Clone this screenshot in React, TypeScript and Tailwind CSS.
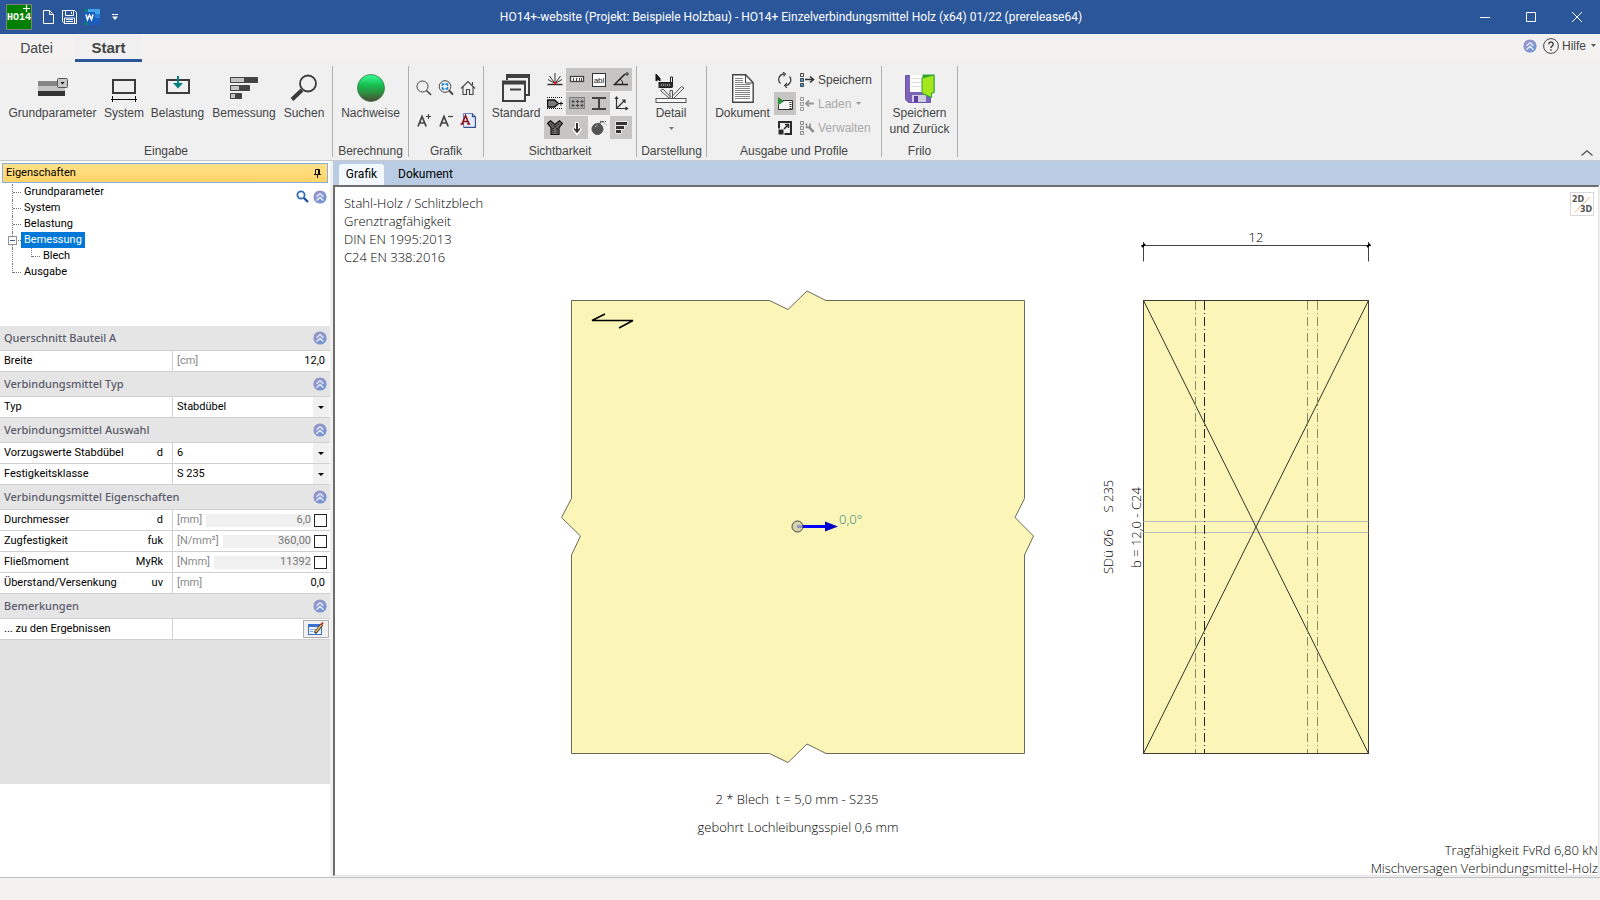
import React from 'react';

interface IconProps {
  className?: string;
}

const CollapseIcon: React.FC<IconProps> = ({ className = 'w-[14px] h-[14px]' }) => (
  <svg viewBox="0 0 14 14" className={className} fill="none">
    <defs>
      <linearGradient id="collapse" x1="0" y1="0" x2="1" y2="1">
        <stop offset="0" stopColor="#9a8fc9" />
        <stop offset="0.5" stopColor="#8d96cc" />
        <stop offset="1" stopColor="#5f93d2" />
      </linearGradient>
    </defs>
    <circle cx="7" cy="7" r="6.6" fill="url(#collapse)" />
    <path d="M3.5 6.8 7 3.6l3.5 3.2M3.5 10.6 7 7.4l3.5 3.2" stroke="#e6f3ff" strokeWidth="1.300" />
  </svg>
);

const LogoIcon = () => (
  <svg viewBox="0 0 26 26" className="w-[26px] h-[26px]">
    <rect x="0.5" y="0.5" width="25" height="25" fill="#008000" stroke="#808080" />
    <path d="M17 4.500h7M20.500 1v7" stroke="#fff" strokeWidth="1.200" />
    <text x="13" y="16" textAnchor="middle" fill="#fff" fontSize="10" fontWeight="700" fontFamily="Liberation Mono, monospace">HO14</text>
  </svg>
);

const NewIcon = () => (
  <svg viewBox="0 0 11 14" className="w-[11px] h-[14px]" fill="none" stroke="#fff">
    <path d="M0.5 0.5h6l4 4v9h-10zM6.500 0.500v4h4" />
  </svg>
);

const SaveIcon = () => (
  <svg viewBox="0 0 15 15" className="w-[15px] h-[15px]" fill="none" stroke="#fff">
    <path d="M0.500 0.500h12l2 2v11h-12l-2-2zM3.500 0.500v5h8v-5M2.500 14v-6h10v6M9.500 2v2M4 9.500h7M4 11.500h7" />
  </svg>
);

const WordIcon = () => (
  <svg viewBox="0 0 16 16" className="w-[16px] h-[16px]">
    <rect width="16" height="16" fill="#1b5cbd" />
    <path d="M4 0h12v5H4z" fill="#41a5ee" />
    <path d="M10 5h6v4h-6z" fill="#2b7cd3" />
    <path d="M0 0h4v3H0zM0 13h4v3H0z" fill="#0f7c7c" />
    <rect x="0" y="3" width="11" height="10" fill="#1a5dbe" />
    <path d="M2 5.500l1.500 5 2-4.500 2 4.500L9 5.500" stroke="#fff" strokeWidth="1.500" fill="none" />
  </svg>
);

const GrundparameterIcon = () => (
  <svg viewBox="0 0 32 28" className="w-[32px] h-[28px]">
    <path d="M1 7h27v5H1z" fill="#868686" />
    <path d="M1 12h27v5H1z" fill="#c4c4c4" />
    <path d="M1 17h27v5H1z" fill="#333" />
    <rect x="20.500" y="4.500" width="10" height="9" rx="1" fill="#c9c9c9" stroke="#555" />
    <path d="M23.500 8h4l-2 2.500z" fill="#111" />
  </svg>
);

const SystemIcon = () => (
  <svg viewBox="0 0 28 28" className="w-[28px] h-[28px]" fill="none">
    <rect x="3" y="6" width="22" height="13" stroke="#3c3c3c" strokeWidth="2" />
    <path d="M1 25.500h26M2.500 22v6M25.500 22v6" stroke="#111" />
  </svg>
);

const BelastungIcon = () => (
  <svg viewBox="0 0 28 28" className="w-[28px] h-[28px]" fill="none">
    <rect x="3" y="6" width="22" height="13" stroke="#3c3c3c" strokeWidth="2" />
    <path d="M14 2v8" stroke="#008080" strokeWidth="2" />
    <path d="M9 9h10l-5 5.500z" fill="#008080" />
  </svg>
);

const BemessungIcon = () => (
  <svg viewBox="0 0 28 28" className="w-[28px] h-[28px]" stroke="#444">
    <path d="M0.500 3.500h27v5h-27zM0.500 11.500h19v5h-19zM0.500 19.500h11v5h-11z" fill="#444" />
    <path d="M0.500 3.500h14v5h-14zM0.500 11.500h9v5h-9zM0.500 19.500h5v5h-5z" fill="#c4c4c4" />
  </svg>
);

const SuchenIcon = () => (
  <svg viewBox="0 0 28 28" className="w-[28px] h-[28px]" fill="none" stroke="#3a3a3a">
    <circle cx="18" cy="9.500" r="8" strokeWidth="1.800" />
    <path d="M12 16 2 25.500" strokeWidth="4" />
  </svg>
);

const NachweiseIcon = () => (
  <svg viewBox="0 0 28 28" className="w-[28px] h-[28px]">
    <defs>
      <linearGradient id="ball" x1="0" y1="0" x2="0" y2="1">
        <stop offset="0" stopColor="#38ff9a" />
        <stop offset="0.400" stopColor="#16bd4e" />
        <stop offset="0.700" stopColor="#2f8a40" />
        <stop offset="1" stopColor="#4e4636" />
      </linearGradient>
    </defs>
    <circle cx="14" cy="14" r="13.500" fill="url(#ball)" stroke="#3b7a45" strokeWidth="0.800" />
  </svg>
);

const StandardIcon = () => (
  <svg viewBox="0 0 28 28" className="w-[28px] h-[28px]" fill="none" stroke="#3f3f3f">
    <path d="M5 6V1M4 2.500h24M27 1v20.500M24 21h4" strokeWidth="2" />
    <path d="M4 2h24" strokeWidth="4" />
    <rect x="1" y="8" width="22" height="19" strokeWidth="2" />
    <path d="M0 8.500h24" strokeWidth="4" />
    <path d="M8 15.500h11" strokeWidth="2" />
  </svg>
);

const DetailIcon = () => (
  <svg viewBox="0 0 32 30" className="w-[32px] h-[30px]" fill="none" stroke="#555">
    <path d="M1 1v7l2-1.500 2 1.500V5.500z" fill="#111" stroke="#111" />
    <rect x="4" y="9.500" width="13" height="5" fill="#333" stroke="#222" />
    <path d="M6 12h10" stroke="#eee" strokeDasharray="1 1" />
    <path d="M15.500 9V4h2v10" stroke="#222" />
    <path d="M5.500 17.500 15 26M8 16l7 7.500M29 15l-10 10M26.500 13.500 17 23.500M29 15l-2.500-1.500M5.500 17.500 8 16" />
    <path d="M15 26v-8.500h2.500V26" />
    <rect x="1" y="25.500" width="30" height="4" fill="#f8f8f8" />
  </svg>
);

const DokumentIcon = () => (
  <svg viewBox="0 0 22 29" className="w-[22px] h-[29px]" fill="none" stroke="#444">
    <path d="M0.700 0.700h13l7.500 8v19.500H0.700z" fill="#fff" strokeWidth="1.400" />
    <path d="M13.500 1v8h7.500" />
    <path d="M3 4.500h8M3 6.500h8M3 8.500h8M3 10.500h15M3 12.500h15M3 14.500h15M3 16.500h15M3 18.500h15M3 20.500h15M3 22.500h15M3 24.500h15" stroke="#858585" />
  </svg>
);

const FriloIcon = () => (
  <svg viewBox="0 0 30 29" className="w-[30px] h-[29px]">
    <path d="M0.500 1.500h25v27h-22l-3-3z" fill="#7c62b8" stroke="#6c52a8" />
    <rect x="5" y="1" width="15" height="17" fill="#fff" />
    <path d="M6 4.500h13M6 8.500h13M6 12.500h13" stroke="#ddd" />
    <rect x="7" y="21" width="14" height="7" fill="#cfcce0" />
    <rect x="9" y="22" width="4" height="6" fill="#5b3fa0" />
    <path d="M17.500 0.500h12v18l-3 1.500v4l-9-4z" fill="#2fa52f" />
    <path d="M17 4 29 1v17.500l-2.500.5v4.500L17 19z" fill="#a6e61c" stroke="#2ea836" />
  </svg>
);

const ZoomIcon = () => (
  <svg viewBox="0 0 16 16" className="w-4 h-4" fill="none" stroke="#444">
    <circle cx="6.500" cy="6.500" r="5.500" />
    <path d="M10.500 10.500 15 15" strokeWidth="1.600" />
  </svg>
);

const ZoomFitIcon = () => (
  <svg viewBox="0 0 16 16" className="w-4 h-4" fill="none" stroke="#444">
    <circle cx="7" cy="6.500" r="5.800" />
    <path d="M11 10.500 15 14.500" strokeWidth="1.800" />
    <path d="M4.500 6V4h2M7.500 4h2v2M9.500 7v2h-2M6.500 9h-2V7" stroke="#1583d8" strokeWidth="1.500" />
  </svg>
);

const HomeIcon = () => (
  <svg viewBox="0 0 16 16" className="w-4 h-4" fill="none" stroke="#444" strokeWidth="1.100">
    <path d="M1 8.500 8 1.500l7 7M3 7v7.500h3.500v-5h3v5H13V7M12.500 5V2" />
  </svg>
);

const FontUpIcon = () => (
  <svg viewBox="0 0 16 16" className="w-4 h-4" fill="none" stroke="#444">
    <path d="M2 14.500 6 4.500l4.200 10M3.500 11h5.200" strokeWidth="1.700" />
    <path d="M10 4.500h5M12.500 2v5" strokeWidth="1.200" />
  </svg>
);

const FontDownIcon = () => (
  <svg viewBox="0 0 16 16" className="w-4 h-4" fill="none" stroke="#444">
    <path d="M2 14.500 6 4.500l4.200 10M3.500 11h5.200" strokeWidth="1.700" />
    <path d="M10 4.500h5" strokeWidth="1.200" />
  </svg>
);

const FontPageIcon = () => (
  <svg viewBox="0 0 16 16" className="w-4 h-4" fill="none">
    <path d="M3.500 1.500h9l3 3v11h-12z" fill="#e4ecfb" stroke="#6a82b8" />
    <path d="M12.500 1.500v3h3M15.500 5v10.500H4" stroke="#35508e" strokeWidth="1.300" />
    <path d="M2 12 5.500 3.500 9 12M3 9.500h4.500M0.500 12h3M7.200 12h3" stroke="#8f0f16" strokeWidth="1.600" />
  </svg>
);

const FanIcon = () => (
  <svg viewBox="0 0 16 16" className="w-4 h-4" stroke="#333" fill="none">
    <path d="M8 11.500V1M8 11.500 2.500 4M8 11.500 13.500 4M8 11.500 1 7.500M8 11.500l7-4" />
    <path d="M0.500 12.500h15" strokeWidth="1.500" />
    <circle cx="8" cy="11" r="1.500" fill="#e02020" stroke="none" />
  </svg>
);

const RulerIcon = () => (
  <svg viewBox="0 0 16 16" className="w-4 h-4" fill="#fff" stroke="#444">
    <rect x="1.500" y="4.500" width="13" height="5" strokeWidth="1.300" />
    <path d="M4.500 6v3M7.500 6v3M10.500 6v3M12.500 6v3" />
  </svg>
);

const AblIcon = () => (
  <svg viewBox="0 0 16 16" className="w-4 h-4">
    <rect x="1.500" y="1.500" width="13" height="13" fill="#fff" stroke="#333" />
    <text x="8" y="11" fontSize="8" textAnchor="middle" fontFamily="Liberation Sans, sans-serif" fill="#111">abl</text>
  </svg>
);

const AngleIcon = () => (
  <svg viewBox="0 0 16 16" className="w-4 h-4" fill="none" stroke="#222">
    <path d="M15 12.500H1.500L12 2" strokeWidth="1.500" />
    <path d="M7 7q3 1.500 3 5.500" />
    <circle cx="14" cy="2" r="1.200" />
  </svg>
);

const DowelIcon = () => (
  <svg viewBox="0 0 16 16" className="w-4 h-4" fill="none" stroke="#111">
    <path d="M0 1.500h16M0 12.500h16" strokeDasharray="1 1" />
    <path d="M0.500 4h7l4 3.500-4 3.500h-7z" fill="#7a7a7a" strokeWidth="1.400" />
    <path d="M12 7.500h4M14 5.500v4" />
  </svg>
);

const GridIcon = () => (
  <svg viewBox="0 0 16 16" className="w-4 h-4" fill="none" stroke="#444">
    <rect x="0.500" y="1.500" width="15" height="11" strokeDasharray="1 1" fill="#aaa" />
    <path d="M2.500 5.500h3M7 5.500h3M11.500 5.500h3M2.500 9.500h3M7 9.500h3M11.500 9.500h3M4 4v3M8.500 4v3M13 4v3M4 8v3M8.500 8v3M13 8v3" />
  </svg>
);

const BeamIcon = () => (
  <svg viewBox="0 0 16 16" className="w-4 h-4" fill="none" stroke="#444">
    <path d="M1 2h14M1 13h14M8 3v10" strokeWidth="2" />
  </svg>
);

const AxesIcon = () => (
  <svg viewBox="0 0 16 16" className="w-4 h-4" fill="none" stroke="#333">
    <path d="M3.500 1v11.500H14M3.500 12.500 11.500 4.500M2 3l1.500-2L5 3M12.500 11l2 1.500-2 1.500M9 4h3v3" strokeWidth="1.200" />
  </svg>
);

const CrossPlateIcon = () => (
  <svg viewBox="0 0 16 16" className="w-4 h-4" fill="#666" stroke="#111">
    <path d="M0.500 3.500 3.500 .8 8 4.500 12.500.8l3 2.700L12 7.500v7H4v-7z" strokeWidth="1.200" />
    <path d="M6 8v6M10 8v6M4 4l8 6M12 4 4 10" strokeDasharray="1 1" />
  </svg>
);

const ArrowDownIcon = () => (
  <svg viewBox="0 0 16 16" className="w-4 h-4" fill="none">
    <path d="M8 2v10M4.500 8 8 12.500 11.500 8" stroke="#fff" strokeWidth="4" />
    <path d="M8 3v8" stroke="#333" strokeWidth="2" />
    <path d="M5 8.500 8 12l3-3.500" strokeWidth="1.500" stroke="#333" />
  </svg>
);

const BombIcon = () => (
  <svg viewBox="0 0 16 16" className="w-4 h-4" fill="none" stroke="#555">
    <circle cx="6.500" cy="9" r="5.500" fill="#555" />
    <path d="M8.500 4l1.500-2.500 3 .5" strokeWidth="1.200" />
    <path d="M12 1.500h4M13.500 3.500l2 1.500" strokeDasharray="1 1" />
    <path d="M4 7q1-1.500 2.500-1.500" stroke="#bbb" />
  </svg>
);

const BarsIcon = () => (
  <svg viewBox="0 0 16 16" className="w-4 h-4" fill="#333" stroke="#e8e8e8">
    <path d="M2.500 1.500h12v4h-12zM2.500 5.500h9v4h-9zM2.500 9.500h6v4h-6z" />
  </svg>
);

const RefreshIcon = () => (
  <svg viewBox="0 0 16 16" className="w-4 h-4" fill="none" stroke="#444">
    <path d="M3.500 11.500A5.500 5.500 0 0 1 7.500 2M12.500 4.500a5.500 5.500 0 0 1-4 9" strokeWidth="1.300" />
    <path d="M6 0 8.500 2 6.500 4.500M10 11 7.500 13.500 10 16" strokeWidth="1.100" />
  </svg>
);

const PreviewIcon = () => (
  <svg viewBox="0 0 16 16" className="w-4 h-4" fill="none">
    <path d="M4 4.500h11.500v9H1.500V9" fill="#f5f5f5" stroke="#333" />
    <path d="M13.500 6v7" stroke="#333" strokeWidth="2" strokeDasharray="1 1" />
    <path d="M1 1v8.500L7 5.200z" fill="#2f8f3c" />
  </svg>
);

const ExpandIcon = () => (
  <svg viewBox="0 0 16 16" className="w-4 h-4" fill="none" stroke="#2b2b2b">
    <rect x="2" y="2" width="12" height="12" strokeWidth="2" />
    <path d="M1 9h6v6H1z" fill="#2b2b2b" stroke="#f0f0f0" />
    <path d="M7 9l4-4M8 4.500h3.500V8" strokeWidth="1.500" />
  </svg>
);

const ProfileSaveIcon = () => (
  <svg viewBox="0 0 16 16" className="w-4 h-4" fill="none">
    <path d="M1.500 1.500h3v3h-3z" stroke="#444" />
    <path d="M1.500 6.500h3v3h-3zM1.500 11.500h3v3h-3z" fill="#3aa5e8" stroke="#444" />
    <path d="M6 7.500h8M11 4.500l3.500 3-3.500 3" stroke="#333" strokeWidth="1.600" />
  </svg>
);

const ProfileLoadIcon = () => (
  <svg viewBox="0 0 16 16" className="w-4 h-4" fill="none" stroke="#999">
    <path d="M1.500 1.500h3v3h-3zM1.500 6.500h3v3h-3zM1.500 11.500h3v3h-3z" />
    <path d="M15 7.500H7.500M10 4.500l-3 3 3 3" strokeWidth="1.800" />
  </svg>
);

const ProfileManageIcon = () => (
  <svg viewBox="0 0 16 16" className="w-4 h-4" fill="none" stroke="#888">
    <path d="M1.500 1.500h3v3h-3zM1.500 6.500h3v3h-3zM1.500 11.500h3v3h-3z" />
    <path d="M9.500 6.500l5 5.500" strokeWidth="2.500" />
    <path d="M7.500 3.500v4H11v-4" strokeWidth="1.500" />
  </svg>
);

const EditNoteIcon = () => (
  <svg viewBox="0 0 16 14" className="w-[16px] h-[14px]">
    <rect x="0.500" y="2.500" width="13" height="10" fill="#eaf1ff" stroke="#3f6cc0" />
    <path d="M0 2h14v3H0z" fill="#3a6fd0" />
    <path d="M2 7.500h3M6 7.500h3M2 9.500h3M6 9.500h2" stroke="#7fa3dc" />
    <path d="M7 11 14 2.500" stroke="#333" strokeWidth="3" />
    <path d="M7.500 10 14 2.500" stroke="#f0c35a" strokeWidth="1.500" />
    <path d="M13 3l2-2.500" stroke="#c0392b" strokeWidth="2" />
  </svg>
);

interface BigItem {
  label: string;
  width: string;
  icon: React.ReactNode;
}

const eingabeItems: BigItem[] = [
  { label: 'Grundparameter', width: 'w-[91px]', icon: <GrundparameterIcon /> },
  { label: 'System', width: 'w-[40px]', icon: <SystemIcon /> },
  { label: 'Belastung', width: 'w-[55px]', icon: <BelastungIcon /> },
  { label: 'Bemessung', width: 'w-[66px]', icon: <BemessungIcon /> },
  { label: 'Suchen', width: 'w-[42px]', icon: <SuchenIcon /> },
];

const grafikItems = [
  { label: 'Zoom', icon: <ZoomIcon /> },
  { label: 'Zoom Fenster', icon: <ZoomFitIcon /> },
  { label: 'Gesamtansicht', icon: <HomeIcon /> },
  { label: 'Schrift größer', icon: <FontUpIcon /> },
  { label: 'Schrift kleiner', icon: <FontDownIcon /> },
  { label: 'Schriftart', icon: <FontPageIcon /> },
];

const viewToggles = [
  { label: 'Lager', on: false, icon: <FanIcon /> },
  { label: 'Bemaßung', on: true, icon: <RulerIcon /> },
  { label: 'Texte', on: true, icon: <AblIcon /> },
  { label: 'Winkel', on: true, icon: <AngleIcon /> },
  { label: 'Dübel', on: false, icon: <DowelIcon /> },
  { label: 'Raster', on: true, icon: <GridIcon /> },
  { label: 'Profil', on: true, icon: <BeamIcon /> },
  { label: 'Achsen', on: false, icon: <AxesIcon /> },
  { label: 'Blech', on: true, icon: <CrossPlateIcon /> },
  { label: 'Last', on: true, icon: <ArrowDownIcon /> },
  { label: 'Ausfall', on: false, icon: <BombIcon /> },
  { label: 'Ergebnisse', on: true, icon: <BarsIcon /> },
];

interface RibbonGroupProps {
  title: string;
  width: string;
  children: React.ReactNode;
}

const RibbonGroup: React.FC<RibbonGroupProps> = ({ title, width, children }) => (
  <section className={`${width} h-[91px] shrink-0 border-r border-[#b0b0b0] flex flex-col`}>
    <div className="flex h-[77px] shrink-0">{children}</div>
    <h2 className="text-center leading-4">{title}</h2>
  </section>
);

const BigButton: React.FC<{ width: string; icon: React.ReactNode; children: React.ReactNode }> = ({ width, icon, children }) => (
  <button className={`${width} shrink-0 pt-[5px] flex flex-col items-center whitespace-nowrap`}>
    <span className="h-[34px] flex items-center">{icon}</span>
    <span className="leading-4">{children}</span>
  </button>
);

const TitleBar = () => (
  <header className="h-[34px] bg-[#2b579a] text-white flex items-center pl-[6px] shrink-0">
    <div className="flex items-center w-[114px] shrink-0">
      <LogoIcon />
      <button aria-label="Neu" className="ml-[11px]"><NewIcon /></button>
      <button aria-label="Speichern" className="ml-[8px]"><SaveIcon /></button>
      <button aria-label="Word" className="ml-[7px]"><WordIcon /></button>
      <button aria-label="Anpassen" className="ml-[12px]">
        <svg viewBox="0 0 6 6" className="w-[6px] h-[6px]" fill="#fff"><path d="M0 0h6v1H0zM0 2.500h6L3 6z" /></svg>
      </button>
    </div>
    <h1 className="flex-1 text-center text-xs font-['Roboto',sans-serif] whitespace-nowrap">
      HO14+-website (Projekt: Beispiele Holzbau) - HO14+ Einzelverbindungsmittel Holz (x64) 01/22 (prerelease64)
    </h1>
    <div className="flex w-[138px] shrink-0">
      <button aria-label="Minimieren" className="w-[46px] flex justify-center">
        <svg viewBox="0 0 10 10" className="w-[10px] h-[10px]" stroke="#fff"><path d="M0 5.500h10" /></svg>
      </button>
      <button aria-label="Maximieren" className="w-[46px] flex justify-center">
        <svg viewBox="0 0 10 10" className="w-[10px] h-[10px]" stroke="#fff" fill="none"><path d="M0.500 0.500h9v9h-9z" /></svg>
      </button>
      <button aria-label="Schließen" className="w-[46px] flex justify-center">
        <svg viewBox="0 0 10 10" className="w-[10px] h-[10px]" stroke="#fff"><path d="M0 0l10 10M10 0 0 10" /></svg>
      </button>
    </div>
  </header>
);

const MenuTabs = () => (
  <nav className="h-[28px] bg-[#f3f2f1] flex items-stretch shrink-0 text-[#444]">
    <button className="w-[73px] text-sm">Datei</button>
    <button className="w-[67px] ml-[2px] pt-[3px] text-[15px] font-bold border-b-[3px] border-[#2b579a] bg-[#f0f0f0]">Start</button>
    <div className="ml-auto flex items-center pr-[4px]">
      <button aria-label="Menüband einklappen" className="mb-[5px]"><CollapseIcon /></button>
      <button className="ml-[6px] mb-[5px] flex items-center text-xs">
        <svg viewBox="0 0 16 16" className="w-4 h-4" fill="none" stroke="#444">
          <circle cx="8" cy="8" r="7.400" />
          <path d="M5.800 6.200a2.200 2.200 0 1 1 3.300 1.900q-1.100.7-1.100 1.900M8 11.300v1.500" strokeWidth="1.500" />
        </svg>
        <span className="ml-[3px]">Hilfe</span>
        <svg viewBox="0 0 5 3" className="w-[5px] h-[3px] ml-[5px]" fill="#555"><path d="M0 0h5L2.500 3z" /></svg>
      </button>
    </div>
  </nav>
);

const Ribbon = () => (
  <div className="h-[99px] bg-[#f0f0f0] border-b border-[#c8c8c8] flex pt-[4px] shrink-0 text-[#444] text-xs">
    <RibbonGroup title="Eingabe" width="w-[333px]">
      <div className="flex gap-[6px] pl-[7px]">
        {eingabeItems.map((item) => (
          <BigButton key={item.label} width={item.width} icon={item.icon}>{item.label}</BigButton>
        ))}
      </div>
    </RibbonGroup>

    <RibbonGroup title="Berechnung" width="w-[76px]">
      <BigButton width="w-[75px]" icon={<NachweiseIcon />}>Nachweise</BigButton>
    </RibbonGroup>

    <RibbonGroup title="Grafik" width="w-[75px]">
      <div className="grid grid-cols-3 content-start pl-[4px] pt-[6px]">
        {grafikItems.map((item) => (
          <button key={item.label} aria-label={item.label} className="w-[22px] h-[32px] flex items-center justify-center">
            {item.icon}
          </button>
        ))}
      </div>
    </RibbonGroup>

    <RibbonGroup title="Sichtbarkeit" width="w-[153px]">
      <BigButton width="w-[60px] pl-[4px]" icon={<StandardIcon />}>Standard</BigButton>
      <div className="grid grid-cols-4 content-start gap-y-[1px] pt-[2px]">
        {viewToggles.map((item) => (
          <button
            key={item.label}
            aria-label={item.label}
            aria-pressed={item.on}
            className={`w-[22px] h-[23px] flex items-center justify-center ${item.on ? 'bg-[#c6c5c4]' : ''}`}
          >
            {item.icon}
          </button>
        ))}
      </div>
    </RibbonGroup>

    <RibbonGroup title="Darstellung" width="w-[70px]">
      <BigButton width="w-[68px]" icon={<DetailIcon />}>
        <span className="flex flex-col items-center gap-[6px]">
          Detail
          <svg viewBox="0 0 5 3" className="w-[5px] h-[3px]" fill="#777"><path d="M0 0h5L2.500 3z" /></svg>
        </span>
      </BigButton>
    </RibbonGroup>

    <RibbonGroup title="Ausgabe und Profile" width="w-[175px]">
      <BigButton width="w-[67px] pl-[4px]" icon={<DokumentIcon />}>Dokument</BigButton>
      <div className="flex flex-col gap-[1px] pt-[2px]">
        <button aria-label="Aktualisieren" className="w-[22px] h-[23px] flex items-center justify-center"><RefreshIcon /></button>
        <button aria-label="Vorschau" aria-pressed="true" className="w-[22px] h-[23px] flex items-center justify-center bg-[#c6c5c4]"><PreviewIcon /></button>
        <button aria-label="Vergrößern" className="w-[22px] h-[23px] flex items-center justify-center"><ExpandIcon /></button>
      </div>
      <div className="flex flex-col gap-[1px] pt-[2px] pl-[3px]">
        <button className="h-[23px] flex items-center gap-[3px]"><ProfileSaveIcon />Speichern</button>
        <button disabled className="h-[23px] flex items-center gap-[3px] text-[#aaa]">
          <ProfileLoadIcon />
          Laden
          <svg viewBox="0 0 5 3" className="w-[5px] h-[3px] ml-[2px]" fill="#999"><path d="M0 0h5L2.500 3z" /></svg>
        </button>
        <button disabled className="h-[23px] flex items-center gap-[3px] text-[#aaa]"><ProfileManageIcon />Verwalten</button>
      </div>
    </RibbonGroup>

    <RibbonGroup title="Frilo" width="w-[76px]">
      <BigButton width="w-[75px]" icon={<FriloIcon />}>
        Speichern
        <br />
        und Zurück
      </BigButton>
    </RibbonGroup>

    <button aria-label="Menüband minimieren" className="ml-auto mr-[7px] mb-[4px] self-end">
      <svg viewBox="0 0 12 6" className="w-[12px] h-[6px]" fill="none" stroke="#555"><path d="M0.500 5.500 6 .8l5.500 4.700" strokeWidth="1.300" /></svg>
    </button>
  </div>
);

const TreeLeaf: React.FC<{ label: string; last?: boolean }> = ({ label, last }) => (
  <li className="h-4 flex">
    <span className={`w-[9px] border-l border-dotted border-[#777] ${last ? 'h-[9px]' : 'h-4'}`}>
      <span className="block h-[9px] border-b border-dotted border-[#777]" />
    </span>
    <span className="pl-[3px] leading-4">{label}</span>
  </li>
);

const Tree = () => (
  <div className="h-[142px] bg-white flex justify-between shrink-0">
    <ul className="pl-[12px]">
      <TreeLeaf label="Grundparameter" />
      <TreeLeaf label="System" />
      <TreeLeaf label="Belastung" />
      <li className="relative">
        <div className="h-4 flex border-l border-dotted border-[#777]">
          <button aria-label="Bemessung zuklappen" className="absolute left-[-4px] top-[4px] w-[9px] h-[9px] border border-[#919191] bg-white flex items-center justify-center">
            <span className="w-[5px] h-px bg-[#3b5b96]" />
          </button>
          <span className="w-[8px] h-[9px] border-b border-dotted border-[#777]" />
          <span className="w-[64px] h-4 pl-[3px] leading-4 bg-[#0078d7] text-white">Bemessung</span>
        </div>
        <ul className="pl-[18px] border-l border-dotted border-[#777]">
          <TreeLeaf label="Blech" last />
        </ul>
      </li>
      <TreeLeaf label="Ausgabe" last />
    </ul>
    <div className="flex items-start gap-[4px] pt-[6px] pr-[3px]">
      <button aria-label="Suchen">
        <svg viewBox="0 0 13 13" className="w-[13px] h-[13px]" fill="none" stroke="#2f6cb5">
          <circle cx="5" cy="5" r="3.600" strokeWidth="1.800" />
          <path d="M8 8l4 4" strokeWidth="2.400" stroke="#1f4f96" />
        </svg>
      </button>
      <button aria-label="Alle einklappen"><CollapseIcon /></button>
    </div>
  </div>
);

const SectionHead: React.FC<{ title: string }> = ({ title }) => (
  <h3 className="h-[25px] bg-[#e5e5e5] border-b border-[#d0d0d0] pl-[4px] pr-[3px] flex items-center justify-between text-[11px] font-medium text-[#5a5a6a] font-['Noto_Sans',sans-serif]">
    {title}
    <button aria-label={`${title} einklappen`}><CollapseIcon /></button>
  </h3>
);

interface RowProps {
  id: string;
  label: string;
  symbol?: string;
  children: React.ReactNode;
}

const Row: React.FC<RowProps> = ({ id, label, symbol, children }) => (
  <div className="h-[21px] bg-white border-b border-[#d0d0d0] flex">
    <label htmlFor={id} className="w-[173px] border-r border-[#d0d0d0] pl-[4px] pr-[9px] flex items-center justify-between">
      <span>{label}</span>
      <span>{symbol}</span>
    </label>
    <div className="flex-1 min-w-0 flex items-center pl-[4px]">{children}</div>
  </div>
);

const ValueRow: React.FC<{ id: string; label: string; symbol?: string; unit: string; value: string }> = ({ id, label, symbol, unit, value }) => (
  <Row id={id} label={label} symbol={symbol}>
    <span className="text-[#888]">{unit}</span>
    <input id={id} defaultValue={value} className="flex-1 min-w-0 text-right pr-[5px] outline-none" />
  </Row>
);

const LockedRow: React.FC<{ id: string; label: string; symbol: string; unit: string; value: string }> = ({ id, label, symbol, unit, value }) => (
  <Row id={id} label={label} symbol={symbol}>
    <span className="text-[#888] mr-[4px]">{unit}</span>
    <input id={id} defaultValue={value} disabled className="flex-1 min-w-0 h-[13px] text-right bg-[#f0f0f0] text-[#777]" />
    <input
      type="checkbox"
      aria-label={`${label} bearbeiten`}
      className="appearance-none w-[13px] h-[13px] ml-[3px] mr-[3px] border border-[#222] bg-white"
    />
  </Row>
);

const SelectRow: React.FC<{ id: string; label: string; symbol?: string; value: string }> = ({ id, label, symbol, value }) => (
  <Row id={id} label={label} symbol={symbol}>
    <div className="relative flex-1 h-full mr-[1px]">
      <select id={id} defaultValue={value} className="appearance-none w-full h-full outline-none">
        <option>{value}</option>
      </select>
      <span className="absolute right-0 top-0 w-4 h-full bg-[#f0f0f0] flex items-center justify-center pointer-events-none">
        <svg viewBox="0 0 6 3" className="w-[6px] h-[3px]"><path d="M0 0h6L3 3z" /></svg>
      </span>
    </div>
  </Row>
);

const PropertyPanel = () => (
  <aside className="w-[330px] shrink-0 bg-white flex flex-col text-[11px] text-black font-['Roboto',sans-serif]">
    <div className="h-[20px] mt-[2px] ml-[2px] mr-[2px] mb-[1px] pl-[3px] pr-[5px] shrink-0 border border-[#86aede] bg-linear-to-b from-[#ffe08a] to-[#ffd465] flex items-center justify-between">
      <h2>Eigenschaften</h2>
      <button aria-label="Fixieren">
        <svg viewBox="0 0 9 9" className="w-[9px] h-[9px]" fill="none" stroke="#111">
          <path d="M2.500 5.500v-5h4v5M5.500 0.500v5M1 5.500h7M4.500 5.500V9" />
        </svg>
      </button>
    </div>
    <Tree />
    <SectionHead title="Querschnitt Bauteil A" />
    <ValueRow id="breite" label="Breite" unit="[cm]" value="12,0" />
    <SectionHead title="Verbindungsmittel Typ" />
    <SelectRow id="typ" label="Typ" value="Stabdübel" />
    <SectionHead title="Verbindungsmittel Auswahl" />
    <SelectRow id="vorzug" label="Vorzugswerte Stabdübel" symbol="d" value="6" />
    <SelectRow id="klasse" label="Festigkeitsklasse" value="S 235" />
    <SectionHead title="Verbindungsmittel Eigenschaften" />
    <LockedRow id="durchmesser" label="Durchmesser" symbol="d" unit="[mm]" value="6,0" />
    <LockedRow id="zug" label="Zugfestigkeit" symbol="fuk" unit="[N/mm²]" value="360,00" />
    <LockedRow id="moment" label="Fließmoment" symbol="MyRk" unit="[Nmm]" value="11392" />
    <ValueRow id="ueberstand" label="Überstand/Versenkung" symbol="uv" unit="[mm]" value="0,0" />
    <SectionHead title="Bemerkungen" />
    <Row id="ergebnisse" label="... zu den Ergebnissen">
      <button id="ergebnisse" aria-label="Bemerkung bearbeiten" className="ml-auto mr-[1px] w-[26px] h-[18px] border border-[#adadad] bg-[#f0f0f0] flex items-center justify-center">
        <EditNoteIcon />
      </button>
    </Row>
    <div className="h-[144px] bg-[#e1e1e1]" />
  </aside>
);

const Drawing = () => (
  <svg viewBox="335 187 1263 688" className="block w-full h-full" fontFamily="Open Sans, sans-serif" fontSize="13" fontWeight="300" fill="#000">
    <path
      d="M571.500 300.500H769.500L788 309.500 807 291 826 300.500H1024.500V498.500L1015 517.500 1033.500 536 1024.500 555V753.500H826L807 744 788 762.500 769.500 753.500H571.500V555L580.500 536 561.500 517.500 571.500 498.500Z"
      fill="#fcf5b8"
      stroke="#6b6a56"
    />
    <path d="M605 314 592 320.500H633L619 328" fill="none" stroke="#000" strokeWidth="1.500" />
    <path d="M797 526.500H826" stroke="#0000ff" strokeWidth="3" />
    <path d="M825 521.500 838 526.500 825 531.500Z" fill="#0000c8" />
    <circle cx="797.500" cy="526.500" r="5.500" fill="#c8c8a8" fillOpacity="0.750" stroke="#444" />
    <text x="839" y="524" fill="#1c8383">0,0°</text>

    <text x="797" y="804" textAnchor="middle" className="whitespace-pre">{'2 * Blech  t = 5,0 mm - S235'}</text>
    <text x="798" y="832" textAnchor="middle">gebohrt Lochleibungsspiel 0,6 mm</text>

    <rect x="1143.500" y="300.500" width="225" height="453" fill="#fcf5b8" stroke="#3c3c34" />
    <path d="M1143.500 521.500H1368.500M1143.500 532.500H1368.500" stroke="#bdbdbd" />
    <path d="M1143.500 300.500 1368.500 753.500M1368.500 300.500 1143.500 753.500" stroke="#33332b" />
    <path d="M1195.500 301V753M1307.500 301V753M1317.500 301V753" stroke="#8a8766" strokeDasharray="9 3 1 3" />
    <path d="M1204.500 301V753" stroke="#222" strokeDasharray="9 3 1 3" />

    <path d="M1141 245.500H1371M1143.500 242V261.500M1368.500 242V261.500" stroke="#444" />
    <path d="M1142 247l3-3M1367 247l3-3" stroke="#000" strokeWidth="2" />
    <text x="1256" y="242" textAnchor="middle">12</text>
    <text transform="translate(1113 574) rotate(-90)" className="whitespace-pre">{'SDü Ø6     S 235'}</text>
    <text transform="translate(1141 568) rotate(-90)">b = 12,0 - C24</text>
  </svg>
);

const GraphicView = () => (
  <main className="flex-1 min-w-0 ml-[3px] flex flex-col">
    <div className="h-[24px] bg-[#b9cce4] flex shrink-0 text-xs text-black pl-[6px] pt-[3px] font-['Roboto',sans-serif]">
      <button className="w-[45px] pb-[2px] rounded-t-[3px] bg-[#f3f8fe]">Grafik</button>
      <button className="ml-[14px] pb-[2px]">Dokument</button>
    </div>
    <div className="relative flex-1 min-h-0 mr-[1px] mb-[1px] border-t-2 border-l-2 border-r border-b border-t-[#6d6d6d] border-l-[#6d6d6d] border-r-[#e3e3e3] border-b-[#e3e3e3] bg-white">
      <Drawing />
      <div className="absolute left-[9px] top-[7px] text-[13px] leading-[18px] font-light text-black font-['Open_Sans',sans-serif]">
        <p>Stahl-Holz / Schlitzblech</p>
        <p>Grenztragfähigkeit</p>
        <p>DIN EN 1995:2013</p>
        <p>C24 EN 338:2016</p>
      </div>
      <div className="absolute right-0 -bottom-0.5 text-right text-[13px] leading-[18px] font-light text-black font-['Open_Sans',sans-serif]">
        <p>Tragfähigkeit FvRd 6,80 kN</p>
        <p>Mischversagen Verbindungsmittel-Holz</p>
      </div>
      <button aria-label="2D/3D umschalten" className="absolute right-[4px] top-[5px] w-[24px] h-[24px] border border-[#d8d8d8]">
        <svg viewBox="0 0 22 22" className="w-[22px] h-[22px]" fontFamily="DejaVu Sans, sans-serif" fontWeight="700" fontSize="8" fill="#555">
          <path d="M4 19 19 4" stroke="#f5c172" />
          <text x="1" y="9">2D</text>
          <text x="9" y="19">3D</text>
        </svg>
      </button>
    </div>
  </main>
);

const App = () => {
  return (
    <div className="h-screen flex flex-col overflow-hidden bg-[#f0f0f0] font-['Liberation_Sans',Arial,sans-serif]">
      <TitleBar />
      <MenuTabs />
      <Ribbon />
      <div className="flex-1 min-h-0 flex">
        <PropertyPanel />
        <GraphicView />
      </div>
      <footer className="h-[23px] shrink-0 bg-[#f3f2f1] border-t border-[#c0c0c0]" />
    </div>
  );
};

export default App;
